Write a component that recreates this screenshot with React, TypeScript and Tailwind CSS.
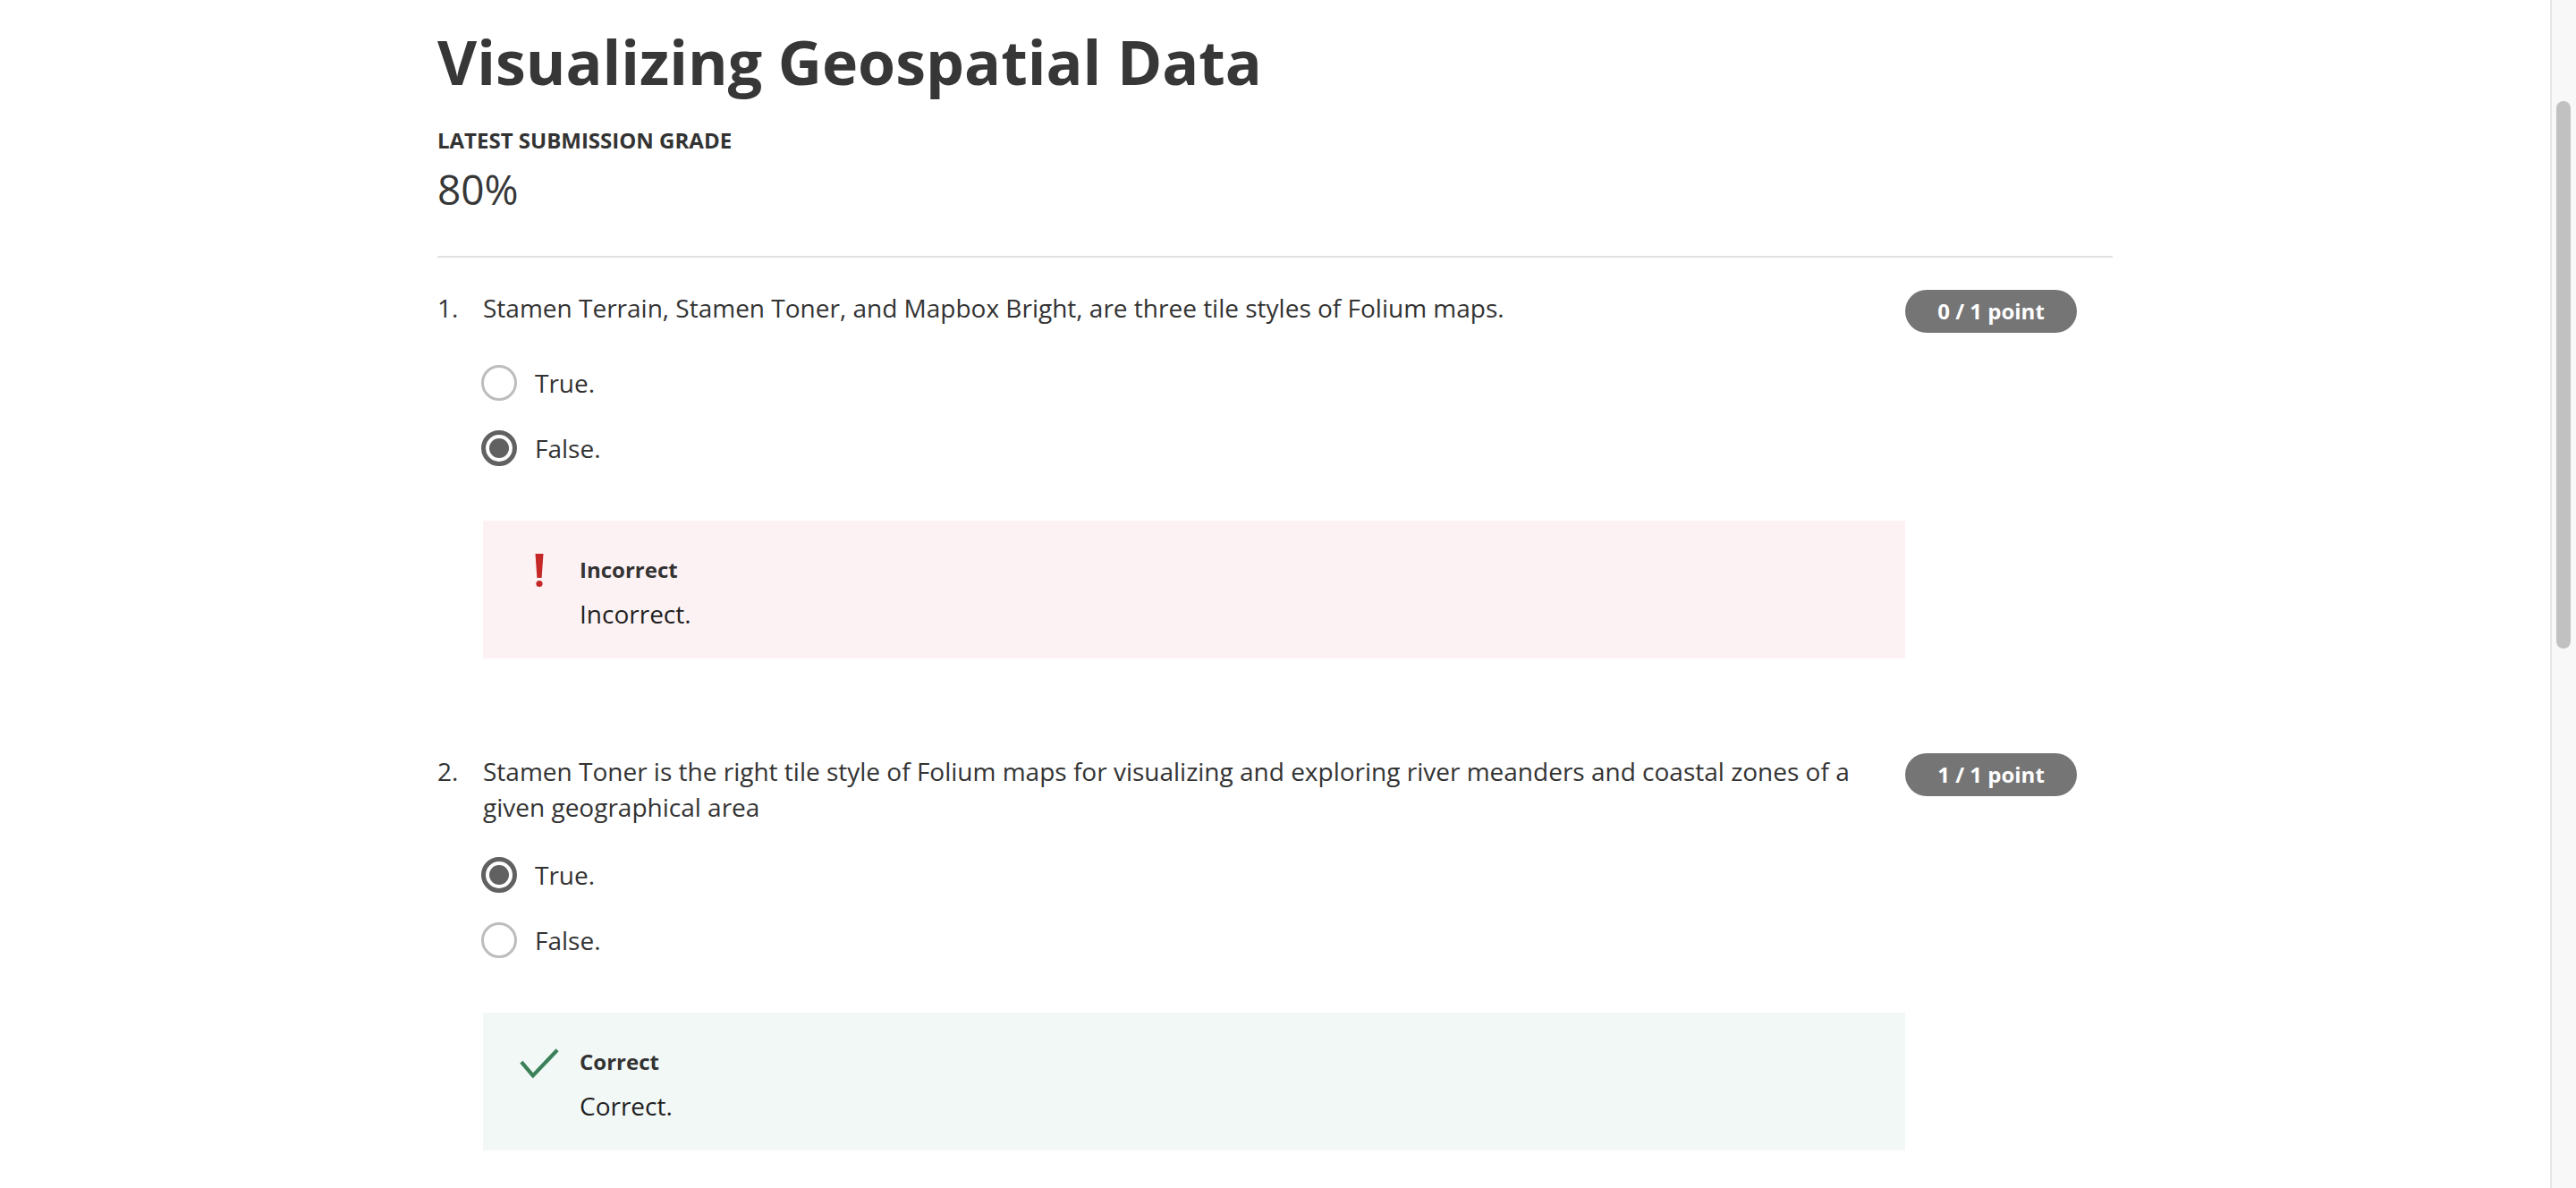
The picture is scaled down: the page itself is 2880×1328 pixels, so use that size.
const questions = [
  {
    n: 1,
    text: "Stamen Terrain, Stamen Toner, and Mapbox Bright, are three tile styles of Folium maps.",
    score: "0 / 1 point",
    options: ["True.", "False."],
    selected: 1,
    correct: false,
  },
  {
    n: 2,
    text: "Stamen Toner is the right tile style of Folium maps for visualizing and exploring river meanders and coastal zones of a given geographical area",
    score: "1 / 1 point",
    options: ["True.", "False."],
    selected: 0,
    correct: true,
  },
];

function Radio({ checked }: { checked: boolean }) {
  if (checked) {
    return (
      <div className="w-[40px] h-[40px] rounded-full border-[5px] border-[#616161] flex items-center justify-center shrink-0">
        <div className="w-[22px] h-[22px] rounded-full bg-[#616161]" />
      </div>
    );
  }
  return <div className="w-[40px] h-[40px] rounded-full border-[3px] border-[#bdbdbd] shrink-0" />;
}

function Feedback({ correct }: { correct: boolean }) {
  return (
    <div
      className={`flex pt-[39px] pb-[30px] ${correct ? "bg-[#f2f8f6]" : "bg-[#fdf2f3]"}`}
    >
      <div className="w-[44px] ml-[41px] mr-[23px] shrink-0 flex justify-center">
        {correct ? (
          <svg width="46" height="34" viewBox="0 0 46 34" className="mt-[1px]">
            <polyline points="2,15 15.5,31 44,1" fill="none" stroke="#3a8159" strokeWidth="4.5" />
          </svg>
        ) : (
          <svg width="10" height="38" viewBox="0 0 10 38" className="mt-[-2px]">
            <path d="M0.5 0 H9.5 L7.6 27 H2.4 Z" fill="#c62828" />
            <circle cx="5" cy="33.5" r="3.6" fill="#c62828" />
          </svg>
        )}
      </div>
      <div>
        <div className="text-[24px] leading-[32px] font-bold text-[#333333]">
          {correct ? "Correct" : "Incorrect"}
        </div>
        <div className="mt-[13px] text-[28px] leading-[40px] text-[#1f1f1f]">
          {correct ? "Correct." : "Incorrect."}
        </div>
      </div>
    </div>
  );
}

export default function App() {
  return (
    <div
      className="flex h-[1328px] overflow-hidden bg-white text-[#333333]"
      style={{ fontFamily: '"Open Sans", "Noto Sans", sans-serif' }}
    >
      <div className="flex-1">
        <div className="w-[1873px] mx-auto pt-[25px]">
          <h1 className="text-[68px] leading-[88px] font-bold text-[#373737]">
            Visualizing Geospatial Data
          </h1>
          <div className="mt-[29px] text-[24px] leading-[30px] font-bold text-[#333333]">
            LATEST SUBMISSION GRADE
          </div>
          <div className="mt-[11px] text-[46px] leading-[56px] text-[#373737]">80%</div>
          <div className="mt-[47px] h-[2px] bg-[#e1e1e1]" />

          <div className="pt-[36px]">
            {questions.map((q, qi) => (
              <div key={q.n} className={`flex ${qi > 0 ? "mt-[106px]" : ""}`}>
                <div className="w-[51px] shrink-0 text-[28px] leading-[40px] text-[#333333]">
                  {q.n}.
                </div>
                <div className="w-[1590px] shrink-0">
                  <div className="flex min-h-[48px]">
                    <div className="w-[1560px] text-[28px] leading-[40px] text-[#333333]">
                      {q.text}
                    </div>
                  </div>
                  <div className="mt-[36px] flex flex-col gap-[33px]">
                    {q.options.map((o, oi) => (
                      <div key={o} className="flex items-center gap-[20px] -ml-[2px]">
                        <Radio checked={oi === q.selected} />
                        <span className="text-[28px] leading-[40px] text-[#333333]">{o}</span>
                      </div>
                    ))}
                  </div>
                  <div className="mt-[61px]">
                    <Feedback correct={q.correct} />
                  </div>
                </div>
                <div className="shrink-0">
                  <div className="w-[192px] h-[48px] rounded-full bg-[#757575] text-white text-[24px] font-bold flex items-center justify-center">
                    {q.score}
                  </div>
                </div>
              </div>
            ))}
          </div>
        </div>
      </div>
      <div className="w-[29px] shrink-0 border-l-2 border-[#e6e6e6] bg-[#f8f8f8]">
        <div className="mt-[113px] ml-[5px] w-[16px] h-[612px] rounded-full bg-[#c1c1c1]" />
      </div>
    </div>
  );
}
